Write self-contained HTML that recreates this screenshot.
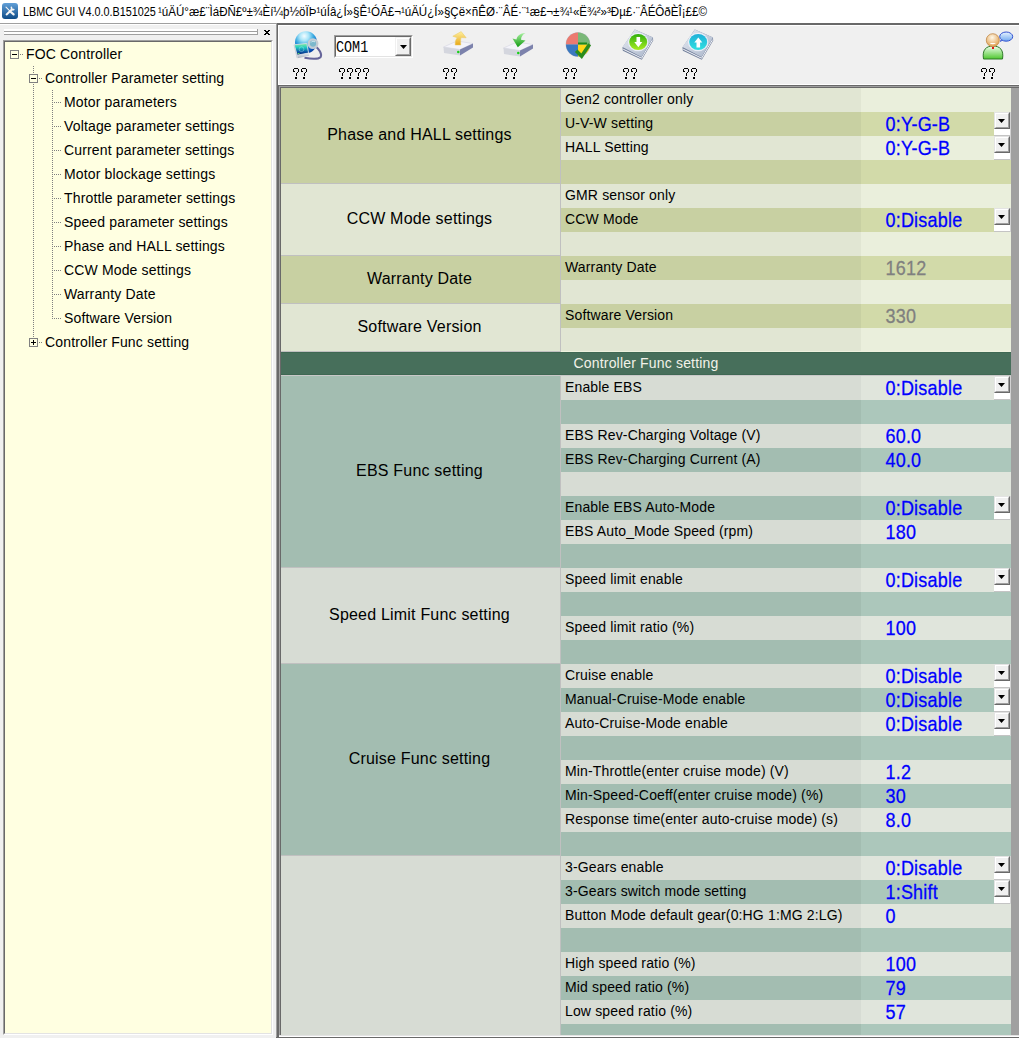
<!DOCTYPE html>
<html><head><meta charset="utf-8"><title>LBMC GUI</title>
<style>
*{margin:0;padding:0;box-sizing:border-box}
html,body{width:1020px;height:1038px;overflow:hidden;background:#F0F0F0;font-family:"Liberation Sans",sans-serif;color:#000}
.a{position:absolute}
.t{position:absolute;white-space:pre;line-height:1}
.tt{font-size:14px;letter-spacing:0.15px}
.ft{font-size:14px;left:565px;letter-spacing:0.15px}
.vt{font-size:18px;left:885.5px;letter-spacing:0.2px;color:#0000FF;transform-origin:0 14px;transform:scaleY(1.077);-webkit-text-stroke:0.25px currentColor}
.gt{font-size:16px;left:280px;width:279px;text-align:center;letter-spacing:0.2px}
.mono{font-family:"Liberation Mono",monospace}
</style></head><body>

<div class="a" style="left:0;top:0;width:1020px;height:23px;background:#fff"></div>
<div class="a" style="left:0;top:23px;width:276px;height:1px;background:#A0A0A0"></div>
<div class="a" style="left:0;top:24px;width:276px;height:1px;background:#fff"></div>
<div class="a" style="left:1019px;top:23px;width:1px;height:1015px;background:#fff"></div>
<div class="a" style="left:2px;top:3px;width:16px;height:16px;border-radius:3px;background:linear-gradient(#62A0D8,#0E4A86)"></div>
<svg class="a" style="left:2px;top:3px" width="16" height="16" viewBox="0 0 16 16"><path d="M4 4.2 L8 8.2" stroke="#F4F4F4" stroke-width="1.1" stroke-linecap="round"/><path d="M8 8.2 L11.6 11.4" stroke="#F4F4F4" stroke-width="2.2" stroke-linecap="round"/><path d="M4.6 11.4 L9.8 6.6" stroke="#F4F4F4" stroke-width="2" stroke-linecap="round"/><path d="M9.4 4.4 L9.8 6.6 L11.8 6.6" stroke="#F4F4F4" stroke-width="1.6" fill="none" stroke-linecap="round"/></svg>
<div class="t" style="left:23px;top:6px;font-size:12px"><span style="display:inline-block;transform-origin:0 0;transform:scaleX(0.9)">LBMC GUI V4.0.0.B151025</span></div>
<div class="t" style="left:158px;top:6px;font-size:12px"><span style="display:inline-block;transform-origin:0 0;transform:scaleX(0.963)">¹úÄÚ°æ£¨ÌáÐÑ£º±¾Èí¼þ½öÏÞ¹úÍâ¿Í»§Ê¹ÓÃ£¬¹úÄÚ¿Í»§Çë×ñÊØ·¨ÂÉ·¨¹æ£¬±¾¹«Ë¾²»³Ðµ£·¨ÂÉÔðÈÎ¡££©</span></div>
<div class="a" style="left:4px;top:29px;width:253px;height:2px;background:#fff"></div>
<div class="a" style="left:4px;top:31px;width:253px;height:1px;background:#A0A0A0"></div>
<div class="a" style="left:4px;top:32px;width:253px;height:2px;background:#fff"></div>
<div class="a" style="left:4px;top:34px;width:254px;height:1px;background:#A0A0A0"></div>
<div class="a" style="left:257px;top:29px;width:1px;height:6px;background:#A0A0A0"></div>
<svg class="a" style="left:0;top:0" width="276" height="40"><rect x="264" y="30" width="1" height="1" fill="#000"/><rect x="265" y="30" width="1" height="1" fill="#000"/><rect x="268" y="30" width="1" height="1" fill="#000"/><rect x="269" y="30" width="1" height="1" fill="#000"/><rect x="265" y="31" width="1" height="1" fill="#000"/><rect x="266" y="31" width="1" height="1" fill="#000"/><rect x="267" y="31" width="1" height="1" fill="#000"/><rect x="268" y="31" width="1" height="1" fill="#000"/><rect x="266" y="32" width="1" height="1" fill="#000"/><rect x="267" y="32" width="1" height="1" fill="#000"/><rect x="265" y="33" width="1" height="1" fill="#000"/><rect x="266" y="33" width="1" height="1" fill="#000"/><rect x="267" y="33" width="1" height="1" fill="#000"/><rect x="268" y="33" width="1" height="1" fill="#000"/><rect x="264" y="34" width="1" height="1" fill="#000"/><rect x="265" y="34" width="1" height="1" fill="#000"/><rect x="268" y="34" width="1" height="1" fill="#000"/><rect x="269" y="34" width="1" height="1" fill="#000"/></svg>
<div class="a" style="left:3px;top:40px;width:270px;height:995px;background:#FFFFE1;border-top:1px solid #A0A0A0;border-left:1px solid #A0A0A0;border-right:1px solid #fff;border-bottom:1px solid #fff"><div style="position:absolute;left:0;top:0;right:0;bottom:0;border-top:1px solid #696969;border-left:1px solid #696969;border-right:1px solid #E3E3E3;border-bottom:1px solid #E3E3E3"></div></div>
<div class="a" style="left:276px;top:23px;width:743px;height:2px;background:#696969"></div>
<div class="a" style="left:276px;top:23px;width:1px;height:1015px;background:#A0A0A0"></div>
<div class="a" style="left:277px;top:25px;width:1px;height:1013px;background:#696969"></div>
<div class="a" style="left:278px;top:25px;width:741px;height:60px;background:#F0F0F0;border-left:1px solid #fff;border-top:1px solid #fff;border-bottom:1px solid #fff"></div>
<div class="a" style="left:278px;top:85px;width:741px;height:1px;background:#696969"></div>
<div class="a" style="left:278px;top:86px;width:741px;height:1px;background:#A0A0A0"></div>
<div class="a" style="left:278px;top:87px;width:741px;height:1px;background:#696969"></div>
<div class="a" style="left:278px;top:85px;width:1px;height:953px;background:#696969"></div>
<div class="a" style="left:279px;top:86px;width:1px;height:952px;background:#A0A0A0"></div>
<div class="a" style="left:280px;top:87px;width:1px;height:951px;background:#696969"></div>
<div class="a" style="left:281px;top:88px;width:738px;height:950px;background:#A0A0A0"></div>
<div class="a" style="left:561px;top:88px;width:300px;height:24px;background:#E1E6D3"></div>
<div class="a" style="left:861px;top:88px;width:150px;height:24px;background:#EAEFDC"></div>
<div class="t ft" style="top:92px">Gen2 controller only</div>
<div class="a" style="left:561px;top:112px;width:300px;height:24px;background:#C8D0A2"></div>
<div class="a" style="left:861px;top:112px;width:150px;height:24px;background:#D2DAA9"></div>
<div class="t ft" style="top:116px">U-V-W setting</div>
<div class="t vt" style="top:116px;color:#0000FF">0:Y-G-B</div>
<div class="a" style="left:994px;top:129px;width:16px;height:6px;background:#fff"></div>
<div class="a" style="left:994px;top:135px;width:16px;height:1px;background:#C4C4C4"></div>
<div class="a" style="left:1010px;top:112px;width:1px;height:24px;background:#D2D2D2"></div>
<div class="a" style="left:994px;top:112px;width:16px;height:17px;border-top:1px solid #E3E3E3;border-left:1px solid #E3E3E3;border-right:1px solid #696969;border-bottom:1px solid #696969"><div style="position:absolute;left:0;top:0;width:14px;height:15px;background:#F0F0F0;border-top:1px solid #fff;border-left:1px solid #fff;border-right:1px solid #A0A0A0;border-bottom:1px solid #A0A0A0"></div><svg style="position:absolute;left:3px;top:6px" width="7" height="4"><path d="M0 0H7L3.5 4Z" fill="#000"/></svg></div>
<div class="a" style="left:561px;top:136px;width:300px;height:24px;background:#E1E6D3"></div>
<div class="a" style="left:861px;top:136px;width:150px;height:24px;background:#EAEFDC"></div>
<div class="t ft" style="top:140px">HALL Setting</div>
<div class="t vt" style="top:140px;color:#0000FF">0:Y-G-B</div>
<div class="a" style="left:994px;top:153px;width:16px;height:6px;background:#fff"></div>
<div class="a" style="left:994px;top:159px;width:16px;height:1px;background:#C4C4C4"></div>
<div class="a" style="left:1010px;top:136px;width:1px;height:24px;background:#D2D2D2"></div>
<div class="a" style="left:994px;top:136px;width:16px;height:17px;border-top:1px solid #E3E3E3;border-left:1px solid #E3E3E3;border-right:1px solid #696969;border-bottom:1px solid #696969"><div style="position:absolute;left:0;top:0;width:14px;height:15px;background:#F0F0F0;border-top:1px solid #fff;border-left:1px solid #fff;border-right:1px solid #A0A0A0;border-bottom:1px solid #A0A0A0"></div><svg style="position:absolute;left:3px;top:6px" width="7" height="4"><path d="M0 0H7L3.5 4Z" fill="#000"/></svg></div>
<div class="a" style="left:561px;top:160px;width:300px;height:24px;background:#C8D0A2"></div>
<div class="a" style="left:861px;top:160px;width:150px;height:24px;background:#D2DAA9"></div>
<div class="a" style="left:561px;top:184px;width:300px;height:24px;background:#E1E6D3"></div>
<div class="a" style="left:861px;top:184px;width:150px;height:24px;background:#EAEFDC"></div>
<div class="t ft" style="top:188px">GMR sensor only</div>
<div class="a" style="left:561px;top:208px;width:300px;height:24px;background:#C8D0A2"></div>
<div class="a" style="left:861px;top:208px;width:150px;height:24px;background:#D2DAA9"></div>
<div class="t ft" style="top:212px">CCW Mode</div>
<div class="t vt" style="top:212px;color:#0000FF">0:Disable</div>
<div class="a" style="left:994px;top:225px;width:16px;height:6px;background:#fff"></div>
<div class="a" style="left:994px;top:231px;width:16px;height:1px;background:#C4C4C4"></div>
<div class="a" style="left:1010px;top:208px;width:1px;height:24px;background:#D2D2D2"></div>
<div class="a" style="left:994px;top:208px;width:16px;height:17px;border-top:1px solid #E3E3E3;border-left:1px solid #E3E3E3;border-right:1px solid #696969;border-bottom:1px solid #696969"><div style="position:absolute;left:0;top:0;width:14px;height:15px;background:#F0F0F0;border-top:1px solid #fff;border-left:1px solid #fff;border-right:1px solid #A0A0A0;border-bottom:1px solid #A0A0A0"></div><svg style="position:absolute;left:3px;top:6px" width="7" height="4"><path d="M0 0H7L3.5 4Z" fill="#000"/></svg></div>
<div class="a" style="left:561px;top:232px;width:300px;height:24px;background:#E1E6D3"></div>
<div class="a" style="left:861px;top:232px;width:150px;height:24px;background:#EAEFDC"></div>
<div class="a" style="left:561px;top:256px;width:300px;height:24px;background:#C8D0A2"></div>
<div class="a" style="left:861px;top:256px;width:150px;height:24px;background:#D2DAA9"></div>
<div class="t ft" style="top:260px">Warranty Date</div>
<div class="t vt" style="top:260px;color:#808080">1612</div>
<div class="a" style="left:561px;top:280px;width:300px;height:24px;background:#E1E6D3"></div>
<div class="a" style="left:861px;top:280px;width:150px;height:24px;background:#EAEFDC"></div>
<div class="a" style="left:561px;top:304px;width:300px;height:24px;background:#C8D0A2"></div>
<div class="a" style="left:861px;top:304px;width:150px;height:24px;background:#D2DAA9"></div>
<div class="t ft" style="top:308px">Software Version</div>
<div class="t vt" style="top:308px;color:#808080">330</div>
<div class="a" style="left:561px;top:328px;width:300px;height:24px;background:#E1E6D3"></div>
<div class="a" style="left:861px;top:328px;width:150px;height:24px;background:#EAEFDC"></div>
<div class="a" style="left:561px;top:376px;width:300px;height:24px;background:#D7DCD4"></div>
<div class="a" style="left:861px;top:376px;width:150px;height:24px;background:#E0E5DC"></div>
<div class="t ft" style="top:380px">Enable EBS</div>
<div class="t vt" style="top:380px;color:#0000FF">0:Disable</div>
<div class="a" style="left:994px;top:393px;width:16px;height:6px;background:#fff"></div>
<div class="a" style="left:994px;top:399px;width:16px;height:1px;background:#C4C4C4"></div>
<div class="a" style="left:1010px;top:376px;width:1px;height:24px;background:#D2D2D2"></div>
<div class="a" style="left:994px;top:376px;width:16px;height:17px;border-top:1px solid #E3E3E3;border-left:1px solid #E3E3E3;border-right:1px solid #696969;border-bottom:1px solid #696969"><div style="position:absolute;left:0;top:0;width:14px;height:15px;background:#F0F0F0;border-top:1px solid #fff;border-left:1px solid #fff;border-right:1px solid #A0A0A0;border-bottom:1px solid #A0A0A0"></div><svg style="position:absolute;left:3px;top:6px" width="7" height="4"><path d="M0 0H7L3.5 4Z" fill="#000"/></svg></div>
<div class="a" style="left:561px;top:400px;width:300px;height:24px;background:#A3BDB1"></div>
<div class="a" style="left:861px;top:400px;width:150px;height:24px;background:#ACC7BB"></div>
<div class="a" style="left:561px;top:424px;width:300px;height:24px;background:#D7DCD4"></div>
<div class="a" style="left:861px;top:424px;width:150px;height:24px;background:#E0E5DC"></div>
<div class="t ft" style="top:428px">EBS Rev-Charging Voltage (V)</div>
<div class="t vt" style="top:428px;color:#0000FF">60.0</div>
<div class="a" style="left:561px;top:448px;width:300px;height:24px;background:#A3BDB1"></div>
<div class="a" style="left:861px;top:448px;width:150px;height:24px;background:#ACC7BB"></div>
<div class="t ft" style="top:452px">EBS Rev-Charging Current (A)</div>
<div class="t vt" style="top:452px;color:#0000FF">40.0</div>
<div class="a" style="left:561px;top:472px;width:300px;height:24px;background:#D7DCD4"></div>
<div class="a" style="left:861px;top:472px;width:150px;height:24px;background:#E0E5DC"></div>
<div class="a" style="left:561px;top:496px;width:300px;height:24px;background:#A3BDB1"></div>
<div class="a" style="left:861px;top:496px;width:150px;height:24px;background:#ACC7BB"></div>
<div class="t ft" style="top:500px">Enable EBS Auto-Mode</div>
<div class="t vt" style="top:500px;color:#0000FF">0:Disable</div>
<div class="a" style="left:994px;top:513px;width:16px;height:6px;background:#fff"></div>
<div class="a" style="left:994px;top:519px;width:16px;height:1px;background:#C4C4C4"></div>
<div class="a" style="left:1010px;top:496px;width:1px;height:24px;background:#D2D2D2"></div>
<div class="a" style="left:994px;top:496px;width:16px;height:17px;border-top:1px solid #E3E3E3;border-left:1px solid #E3E3E3;border-right:1px solid #696969;border-bottom:1px solid #696969"><div style="position:absolute;left:0;top:0;width:14px;height:15px;background:#F0F0F0;border-top:1px solid #fff;border-left:1px solid #fff;border-right:1px solid #A0A0A0;border-bottom:1px solid #A0A0A0"></div><svg style="position:absolute;left:3px;top:6px" width="7" height="4"><path d="M0 0H7L3.5 4Z" fill="#000"/></svg></div>
<div class="a" style="left:561px;top:520px;width:300px;height:24px;background:#D7DCD4"></div>
<div class="a" style="left:861px;top:520px;width:150px;height:24px;background:#E0E5DC"></div>
<div class="t ft" style="top:524px">EBS Auto_Mode Speed (rpm)</div>
<div class="t vt" style="top:524px;color:#0000FF">180</div>
<div class="a" style="left:561px;top:544px;width:300px;height:24px;background:#A3BDB1"></div>
<div class="a" style="left:861px;top:544px;width:150px;height:24px;background:#ACC7BB"></div>
<div class="a" style="left:561px;top:568px;width:300px;height:24px;background:#D7DCD4"></div>
<div class="a" style="left:861px;top:568px;width:150px;height:24px;background:#E0E5DC"></div>
<div class="t ft" style="top:572px">Speed limit enable</div>
<div class="t vt" style="top:572px;color:#0000FF">0:Disable</div>
<div class="a" style="left:994px;top:585px;width:16px;height:6px;background:#fff"></div>
<div class="a" style="left:994px;top:591px;width:16px;height:1px;background:#C4C4C4"></div>
<div class="a" style="left:1010px;top:568px;width:1px;height:24px;background:#D2D2D2"></div>
<div class="a" style="left:994px;top:568px;width:16px;height:17px;border-top:1px solid #E3E3E3;border-left:1px solid #E3E3E3;border-right:1px solid #696969;border-bottom:1px solid #696969"><div style="position:absolute;left:0;top:0;width:14px;height:15px;background:#F0F0F0;border-top:1px solid #fff;border-left:1px solid #fff;border-right:1px solid #A0A0A0;border-bottom:1px solid #A0A0A0"></div><svg style="position:absolute;left:3px;top:6px" width="7" height="4"><path d="M0 0H7L3.5 4Z" fill="#000"/></svg></div>
<div class="a" style="left:561px;top:592px;width:300px;height:24px;background:#A3BDB1"></div>
<div class="a" style="left:861px;top:592px;width:150px;height:24px;background:#ACC7BB"></div>
<div class="a" style="left:561px;top:616px;width:300px;height:24px;background:#D7DCD4"></div>
<div class="a" style="left:861px;top:616px;width:150px;height:24px;background:#E0E5DC"></div>
<div class="t ft" style="top:620px">Speed limit ratio (%)</div>
<div class="t vt" style="top:620px;color:#0000FF">100</div>
<div class="a" style="left:561px;top:640px;width:300px;height:24px;background:#A3BDB1"></div>
<div class="a" style="left:861px;top:640px;width:150px;height:24px;background:#ACC7BB"></div>
<div class="a" style="left:561px;top:664px;width:300px;height:24px;background:#D7DCD4"></div>
<div class="a" style="left:861px;top:664px;width:150px;height:24px;background:#E0E5DC"></div>
<div class="t ft" style="top:668px">Cruise enable</div>
<div class="t vt" style="top:668px;color:#0000FF">0:Disable</div>
<div class="a" style="left:994px;top:681px;width:16px;height:6px;background:#fff"></div>
<div class="a" style="left:994px;top:687px;width:16px;height:1px;background:#C4C4C4"></div>
<div class="a" style="left:1010px;top:664px;width:1px;height:24px;background:#D2D2D2"></div>
<div class="a" style="left:994px;top:664px;width:16px;height:17px;border-top:1px solid #E3E3E3;border-left:1px solid #E3E3E3;border-right:1px solid #696969;border-bottom:1px solid #696969"><div style="position:absolute;left:0;top:0;width:14px;height:15px;background:#F0F0F0;border-top:1px solid #fff;border-left:1px solid #fff;border-right:1px solid #A0A0A0;border-bottom:1px solid #A0A0A0"></div><svg style="position:absolute;left:3px;top:6px" width="7" height="4"><path d="M0 0H7L3.5 4Z" fill="#000"/></svg></div>
<div class="a" style="left:561px;top:688px;width:300px;height:24px;background:#A3BDB1"></div>
<div class="a" style="left:861px;top:688px;width:150px;height:24px;background:#ACC7BB"></div>
<div class="t ft" style="top:692px">Manual-Cruise-Mode enable</div>
<div class="t vt" style="top:692px;color:#0000FF">0:Disable</div>
<div class="a" style="left:994px;top:705px;width:16px;height:6px;background:#fff"></div>
<div class="a" style="left:994px;top:711px;width:16px;height:1px;background:#C4C4C4"></div>
<div class="a" style="left:1010px;top:688px;width:1px;height:24px;background:#D2D2D2"></div>
<div class="a" style="left:994px;top:688px;width:16px;height:17px;border-top:1px solid #E3E3E3;border-left:1px solid #E3E3E3;border-right:1px solid #696969;border-bottom:1px solid #696969"><div style="position:absolute;left:0;top:0;width:14px;height:15px;background:#F0F0F0;border-top:1px solid #fff;border-left:1px solid #fff;border-right:1px solid #A0A0A0;border-bottom:1px solid #A0A0A0"></div><svg style="position:absolute;left:3px;top:6px" width="7" height="4"><path d="M0 0H7L3.5 4Z" fill="#000"/></svg></div>
<div class="a" style="left:561px;top:712px;width:300px;height:24px;background:#D7DCD4"></div>
<div class="a" style="left:861px;top:712px;width:150px;height:24px;background:#E0E5DC"></div>
<div class="t ft" style="top:716px">Auto-Cruise-Mode enable</div>
<div class="t vt" style="top:716px;color:#0000FF">0:Disable</div>
<div class="a" style="left:994px;top:729px;width:16px;height:6px;background:#fff"></div>
<div class="a" style="left:994px;top:735px;width:16px;height:1px;background:#C4C4C4"></div>
<div class="a" style="left:1010px;top:712px;width:1px;height:24px;background:#D2D2D2"></div>
<div class="a" style="left:994px;top:712px;width:16px;height:17px;border-top:1px solid #E3E3E3;border-left:1px solid #E3E3E3;border-right:1px solid #696969;border-bottom:1px solid #696969"><div style="position:absolute;left:0;top:0;width:14px;height:15px;background:#F0F0F0;border-top:1px solid #fff;border-left:1px solid #fff;border-right:1px solid #A0A0A0;border-bottom:1px solid #A0A0A0"></div><svg style="position:absolute;left:3px;top:6px" width="7" height="4"><path d="M0 0H7L3.5 4Z" fill="#000"/></svg></div>
<div class="a" style="left:561px;top:736px;width:300px;height:24px;background:#A3BDB1"></div>
<div class="a" style="left:861px;top:736px;width:150px;height:24px;background:#ACC7BB"></div>
<div class="a" style="left:561px;top:760px;width:300px;height:24px;background:#D7DCD4"></div>
<div class="a" style="left:861px;top:760px;width:150px;height:24px;background:#E0E5DC"></div>
<div class="t ft" style="top:764px">Min-Throttle(enter cruise mode) (V)</div>
<div class="t vt" style="top:764px;color:#0000FF">1.2</div>
<div class="a" style="left:561px;top:784px;width:300px;height:24px;background:#A3BDB1"></div>
<div class="a" style="left:861px;top:784px;width:150px;height:24px;background:#ACC7BB"></div>
<div class="t ft" style="top:788px">Min-Speed-Coeff(enter cruise mode) (%)</div>
<div class="t vt" style="top:788px;color:#0000FF">30</div>
<div class="a" style="left:561px;top:808px;width:300px;height:24px;background:#D7DCD4"></div>
<div class="a" style="left:861px;top:808px;width:150px;height:24px;background:#E0E5DC"></div>
<div class="t ft" style="top:812px">Response time(enter auto-cruise mode) (s)</div>
<div class="t vt" style="top:812px;color:#0000FF">8.0</div>
<div class="a" style="left:561px;top:832px;width:300px;height:24px;background:#A3BDB1"></div>
<div class="a" style="left:861px;top:832px;width:150px;height:24px;background:#ACC7BB"></div>
<div class="a" style="left:561px;top:856px;width:300px;height:24px;background:#D7DCD4"></div>
<div class="a" style="left:861px;top:856px;width:150px;height:24px;background:#E0E5DC"></div>
<div class="t ft" style="top:860px">3-Gears enable</div>
<div class="t vt" style="top:860px;color:#0000FF">0:Disable</div>
<div class="a" style="left:994px;top:873px;width:16px;height:6px;background:#fff"></div>
<div class="a" style="left:994px;top:879px;width:16px;height:1px;background:#C4C4C4"></div>
<div class="a" style="left:1010px;top:856px;width:1px;height:24px;background:#D2D2D2"></div>
<div class="a" style="left:994px;top:856px;width:16px;height:17px;border-top:1px solid #E3E3E3;border-left:1px solid #E3E3E3;border-right:1px solid #696969;border-bottom:1px solid #696969"><div style="position:absolute;left:0;top:0;width:14px;height:15px;background:#F0F0F0;border-top:1px solid #fff;border-left:1px solid #fff;border-right:1px solid #A0A0A0;border-bottom:1px solid #A0A0A0"></div><svg style="position:absolute;left:3px;top:6px" width="7" height="4"><path d="M0 0H7L3.5 4Z" fill="#000"/></svg></div>
<div class="a" style="left:561px;top:880px;width:300px;height:24px;background:#A3BDB1"></div>
<div class="a" style="left:861px;top:880px;width:150px;height:24px;background:#ACC7BB"></div>
<div class="t ft" style="top:884px">3-Gears switch mode setting</div>
<div class="t vt" style="top:884px;color:#0000FF">1:Shift</div>
<div class="a" style="left:994px;top:897px;width:16px;height:6px;background:#fff"></div>
<div class="a" style="left:994px;top:903px;width:16px;height:1px;background:#C4C4C4"></div>
<div class="a" style="left:1010px;top:880px;width:1px;height:24px;background:#D2D2D2"></div>
<div class="a" style="left:994px;top:880px;width:16px;height:17px;border-top:1px solid #E3E3E3;border-left:1px solid #E3E3E3;border-right:1px solid #696969;border-bottom:1px solid #696969"><div style="position:absolute;left:0;top:0;width:14px;height:15px;background:#F0F0F0;border-top:1px solid #fff;border-left:1px solid #fff;border-right:1px solid #A0A0A0;border-bottom:1px solid #A0A0A0"></div><svg style="position:absolute;left:3px;top:6px" width="7" height="4"><path d="M0 0H7L3.5 4Z" fill="#000"/></svg></div>
<div class="a" style="left:561px;top:904px;width:300px;height:24px;background:#D7DCD4"></div>
<div class="a" style="left:861px;top:904px;width:150px;height:24px;background:#E0E5DC"></div>
<div class="t ft" style="top:908px">Button Mode default gear(0:HG 1:MG 2:LG)</div>
<div class="t vt" style="top:908px;color:#0000FF">0</div>
<div class="a" style="left:561px;top:928px;width:300px;height:24px;background:#A3BDB1"></div>
<div class="a" style="left:861px;top:928px;width:150px;height:24px;background:#ACC7BB"></div>
<div class="a" style="left:561px;top:952px;width:300px;height:24px;background:#D7DCD4"></div>
<div class="a" style="left:861px;top:952px;width:150px;height:24px;background:#E0E5DC"></div>
<div class="t ft" style="top:956px">High speed ratio (%)</div>
<div class="t vt" style="top:956px;color:#0000FF">100</div>
<div class="a" style="left:561px;top:976px;width:300px;height:24px;background:#A3BDB1"></div>
<div class="a" style="left:861px;top:976px;width:150px;height:24px;background:#ACC7BB"></div>
<div class="t ft" style="top:980px">Mid speed ratio (%)</div>
<div class="t vt" style="top:980px;color:#0000FF">79</div>
<div class="a" style="left:561px;top:1000px;width:300px;height:24px;background:#D7DCD4"></div>
<div class="a" style="left:861px;top:1000px;width:150px;height:24px;background:#E0E5DC"></div>
<div class="t ft" style="top:1004px">Low speed ratio (%)</div>
<div class="t vt" style="top:1004px;color:#0000FF">57</div>
<div class="a" style="left:561px;top:1024px;width:300px;height:11px;background:#A3BDB1"></div>
<div class="a" style="left:861px;top:1024px;width:150px;height:11px;background:#ACC7BB"></div>
<div class="a" style="left:281px;top:351px;width:730px;height:1px;background:#EEF2DF"></div>
<div class="a" style="left:281px;top:352px;width:730px;height:23px;background:#476F5B;border-top:1px solid #3F6853;border-bottom:1px solid #3F6853"></div>
<div class="a" style="left:281px;top:375px;width:730px;height:1px;background:#C8C8C8"></div>
<div class="t tt" style="left:281px;top:356px;width:730px;text-align:center;color:#F2F2E8;letter-spacing:0.18px">Controller Func setting</div>
<div class="a" style="left:281px;top:88px;width:279px;height:96px;background:#C8D0A2;border-bottom:1px solid #C0C0C0"></div>
<div class="a" style="left:560px;top:88px;width:1px;height:96px;background:#C0C0C0"></div>
<div class="t gt" style="top:127px">Phase and HALL settings</div>
<div class="a" style="left:281px;top:184px;width:279px;height:72px;background:#E1E6D3;border-bottom:1px solid #C0C0C0"></div>
<div class="a" style="left:560px;top:184px;width:1px;height:72px;background:#C0C0C0"></div>
<div class="t gt" style="top:211px">CCW Mode settings</div>
<div class="a" style="left:281px;top:256px;width:279px;height:48px;background:#C8D0A2;border-bottom:1px solid #C0C0C0"></div>
<div class="a" style="left:560px;top:256px;width:1px;height:48px;background:#C0C0C0"></div>
<div class="t gt" style="top:271px">Warranty Date</div>
<div class="a" style="left:281px;top:304px;width:279px;height:48px;background:#E1E6D3;border-bottom:1px solid #C0C0C0"></div>
<div class="a" style="left:560px;top:304px;width:1px;height:48px;background:#C0C0C0"></div>
<div class="t gt" style="top:319px">Software Version</div>
<div class="a" style="left:281px;top:376px;width:279px;height:192px;background:#A3BDB1;border-bottom:1px solid #C0C0C0"></div>
<div class="a" style="left:560px;top:376px;width:1px;height:192px;background:#C0C0C0"></div>
<div class="t gt" style="top:463px">EBS Func setting</div>
<div class="a" style="left:281px;top:568px;width:279px;height:96px;background:#D7DCD4;border-bottom:1px solid #C0C0C0"></div>
<div class="a" style="left:560px;top:568px;width:1px;height:96px;background:#C0C0C0"></div>
<div class="t gt" style="top:607px">Speed Limit Func setting</div>
<div class="a" style="left:281px;top:664px;width:279px;height:192px;background:#A3BDB1;border-bottom:1px solid #C0C0C0"></div>
<div class="a" style="left:560px;top:664px;width:1px;height:192px;background:#C0C0C0"></div>
<div class="t gt" style="top:751px">Cruise Func setting</div>
<div class="a" style="left:281px;top:856px;width:279px;height:204px;background:#D7DCD4;border-bottom:1px solid #C0C0C0"></div>
<div class="a" style="left:560px;top:856px;width:1px;height:204px;background:#C0C0C0"></div>
<div class="a" style="left:279px;top:1035px;width:740px;height:1px;background:#E3E3E3"></div>
<div class="a" style="left:279px;top:1036px;width:740px;height:1px;background:#fff"></div>
<div class="a" style="left:276px;top:1037px;width:743px;height:1px;background:#696969"></div>
<div class="t tt" style="left:26px;top:47px">FOC Controller</div>
<div class="t tt" style="left:45px;top:71px">Controller Parameter setting</div>
<div class="t tt" style="left:64px;top:95px">Motor parameters</div>
<div class="t tt" style="left:64px;top:119px">Voltage parameter settings</div>
<div class="t tt" style="left:64px;top:143px">Current parameter settings</div>
<div class="t tt" style="left:64px;top:167px">Motor blockage settings</div>
<div class="t tt" style="left:64px;top:191px">Throttle parameter settings</div>
<div class="t tt" style="left:64px;top:215px">Speed parameter settings</div>
<div class="t tt" style="left:64px;top:239px">Phase and HALL settings</div>
<div class="t tt" style="left:64px;top:263px">CCW Mode settings</div>
<div class="t tt" style="left:64px;top:287px">Warranty Date</div>
<div class="t tt" style="left:64px;top:311px">Software Version</div>
<div class="t tt" style="left:45px;top:335px">Controller Func setting</div>
<svg class="a" style="left:0;top:0" width="276" height="360"><rect x="10.5" y="50.5" width="8" height="8" fill="#FFFFE1" stroke="#808080" stroke-width="1"/><rect x="12" y="54" width="5" height="1" fill="#000"/><rect x="20" y="54" width="1" height="1" fill="#808080"/><rect x="22" y="54" width="1" height="1" fill="#808080"/><rect x="29.5" y="74.5" width="8" height="8" fill="#FFFFE1" stroke="#808080" stroke-width="1"/><rect x="31" y="78" width="5" height="1" fill="#000"/><rect x="39" y="78" width="1" height="1" fill="#808080"/><rect x="41" y="78" width="1" height="1" fill="#808080"/><rect x="33" y="66" width="1" height="1" fill="#808080"/><rect x="33" y="68" width="1" height="1" fill="#808080"/><rect x="33" y="70" width="1" height="1" fill="#808080"/><rect x="33" y="72" width="1" height="1" fill="#808080"/><rect x="33" y="84" width="1" height="1" fill="#808080"/><rect x="33" y="86" width="1" height="1" fill="#808080"/><rect x="33" y="88" width="1" height="1" fill="#808080"/><rect x="33" y="90" width="1" height="1" fill="#808080"/><rect x="33" y="92" width="1" height="1" fill="#808080"/><rect x="33" y="94" width="1" height="1" fill="#808080"/><rect x="33" y="96" width="1" height="1" fill="#808080"/><rect x="33" y="98" width="1" height="1" fill="#808080"/><rect x="33" y="100" width="1" height="1" fill="#808080"/><rect x="33" y="102" width="1" height="1" fill="#808080"/><rect x="33" y="104" width="1" height="1" fill="#808080"/><rect x="33" y="106" width="1" height="1" fill="#808080"/><rect x="33" y="108" width="1" height="1" fill="#808080"/><rect x="33" y="110" width="1" height="1" fill="#808080"/><rect x="33" y="112" width="1" height="1" fill="#808080"/><rect x="33" y="114" width="1" height="1" fill="#808080"/><rect x="33" y="116" width="1" height="1" fill="#808080"/><rect x="33" y="118" width="1" height="1" fill="#808080"/><rect x="33" y="120" width="1" height="1" fill="#808080"/><rect x="33" y="122" width="1" height="1" fill="#808080"/><rect x="33" y="124" width="1" height="1" fill="#808080"/><rect x="33" y="126" width="1" height="1" fill="#808080"/><rect x="33" y="128" width="1" height="1" fill="#808080"/><rect x="33" y="130" width="1" height="1" fill="#808080"/><rect x="33" y="132" width="1" height="1" fill="#808080"/><rect x="33" y="134" width="1" height="1" fill="#808080"/><rect x="33" y="136" width="1" height="1" fill="#808080"/><rect x="33" y="138" width="1" height="1" fill="#808080"/><rect x="33" y="140" width="1" height="1" fill="#808080"/><rect x="33" y="142" width="1" height="1" fill="#808080"/><rect x="33" y="144" width="1" height="1" fill="#808080"/><rect x="33" y="146" width="1" height="1" fill="#808080"/><rect x="33" y="148" width="1" height="1" fill="#808080"/><rect x="33" y="150" width="1" height="1" fill="#808080"/><rect x="33" y="152" width="1" height="1" fill="#808080"/><rect x="33" y="154" width="1" height="1" fill="#808080"/><rect x="33" y="156" width="1" height="1" fill="#808080"/><rect x="33" y="158" width="1" height="1" fill="#808080"/><rect x="33" y="160" width="1" height="1" fill="#808080"/><rect x="33" y="162" width="1" height="1" fill="#808080"/><rect x="33" y="164" width="1" height="1" fill="#808080"/><rect x="33" y="166" width="1" height="1" fill="#808080"/><rect x="33" y="168" width="1" height="1" fill="#808080"/><rect x="33" y="170" width="1" height="1" fill="#808080"/><rect x="33" y="172" width="1" height="1" fill="#808080"/><rect x="33" y="174" width="1" height="1" fill="#808080"/><rect x="33" y="176" width="1" height="1" fill="#808080"/><rect x="33" y="178" width="1" height="1" fill="#808080"/><rect x="33" y="180" width="1" height="1" fill="#808080"/><rect x="33" y="182" width="1" height="1" fill="#808080"/><rect x="33" y="184" width="1" height="1" fill="#808080"/><rect x="33" y="186" width="1" height="1" fill="#808080"/><rect x="33" y="188" width="1" height="1" fill="#808080"/><rect x="33" y="190" width="1" height="1" fill="#808080"/><rect x="33" y="192" width="1" height="1" fill="#808080"/><rect x="33" y="194" width="1" height="1" fill="#808080"/><rect x="33" y="196" width="1" height="1" fill="#808080"/><rect x="33" y="198" width="1" height="1" fill="#808080"/><rect x="33" y="200" width="1" height="1" fill="#808080"/><rect x="33" y="202" width="1" height="1" fill="#808080"/><rect x="33" y="204" width="1" height="1" fill="#808080"/><rect x="33" y="206" width="1" height="1" fill="#808080"/><rect x="33" y="208" width="1" height="1" fill="#808080"/><rect x="33" y="210" width="1" height="1" fill="#808080"/><rect x="33" y="212" width="1" height="1" fill="#808080"/><rect x="33" y="214" width="1" height="1" fill="#808080"/><rect x="33" y="216" width="1" height="1" fill="#808080"/><rect x="33" y="218" width="1" height="1" fill="#808080"/><rect x="33" y="220" width="1" height="1" fill="#808080"/><rect x="33" y="222" width="1" height="1" fill="#808080"/><rect x="33" y="224" width="1" height="1" fill="#808080"/><rect x="33" y="226" width="1" height="1" fill="#808080"/><rect x="33" y="228" width="1" height="1" fill="#808080"/><rect x="33" y="230" width="1" height="1" fill="#808080"/><rect x="33" y="232" width="1" height="1" fill="#808080"/><rect x="33" y="234" width="1" height="1" fill="#808080"/><rect x="33" y="236" width="1" height="1" fill="#808080"/><rect x="33" y="238" width="1" height="1" fill="#808080"/><rect x="33" y="240" width="1" height="1" fill="#808080"/><rect x="33" y="242" width="1" height="1" fill="#808080"/><rect x="33" y="244" width="1" height="1" fill="#808080"/><rect x="33" y="246" width="1" height="1" fill="#808080"/><rect x="33" y="248" width="1" height="1" fill="#808080"/><rect x="33" y="250" width="1" height="1" fill="#808080"/><rect x="33" y="252" width="1" height="1" fill="#808080"/><rect x="33" y="254" width="1" height="1" fill="#808080"/><rect x="33" y="256" width="1" height="1" fill="#808080"/><rect x="33" y="258" width="1" height="1" fill="#808080"/><rect x="33" y="260" width="1" height="1" fill="#808080"/><rect x="33" y="262" width="1" height="1" fill="#808080"/><rect x="33" y="264" width="1" height="1" fill="#808080"/><rect x="33" y="266" width="1" height="1" fill="#808080"/><rect x="33" y="268" width="1" height="1" fill="#808080"/><rect x="33" y="270" width="1" height="1" fill="#808080"/><rect x="33" y="272" width="1" height="1" fill="#808080"/><rect x="33" y="274" width="1" height="1" fill="#808080"/><rect x="33" y="276" width="1" height="1" fill="#808080"/><rect x="33" y="278" width="1" height="1" fill="#808080"/><rect x="33" y="280" width="1" height="1" fill="#808080"/><rect x="33" y="282" width="1" height="1" fill="#808080"/><rect x="33" y="284" width="1" height="1" fill="#808080"/><rect x="33" y="286" width="1" height="1" fill="#808080"/><rect x="33" y="288" width="1" height="1" fill="#808080"/><rect x="33" y="290" width="1" height="1" fill="#808080"/><rect x="33" y="292" width="1" height="1" fill="#808080"/><rect x="33" y="294" width="1" height="1" fill="#808080"/><rect x="33" y="296" width="1" height="1" fill="#808080"/><rect x="33" y="298" width="1" height="1" fill="#808080"/><rect x="33" y="300" width="1" height="1" fill="#808080"/><rect x="33" y="302" width="1" height="1" fill="#808080"/><rect x="33" y="304" width="1" height="1" fill="#808080"/><rect x="33" y="306" width="1" height="1" fill="#808080"/><rect x="33" y="308" width="1" height="1" fill="#808080"/><rect x="33" y="310" width="1" height="1" fill="#808080"/><rect x="33" y="312" width="1" height="1" fill="#808080"/><rect x="33" y="314" width="1" height="1" fill="#808080"/><rect x="33" y="316" width="1" height="1" fill="#808080"/><rect x="33" y="318" width="1" height="1" fill="#808080"/><rect x="33" y="320" width="1" height="1" fill="#808080"/><rect x="33" y="322" width="1" height="1" fill="#808080"/><rect x="33" y="324" width="1" height="1" fill="#808080"/><rect x="33" y="326" width="1" height="1" fill="#808080"/><rect x="33" y="328" width="1" height="1" fill="#808080"/><rect x="33" y="330" width="1" height="1" fill="#808080"/><rect x="33" y="332" width="1" height="1" fill="#808080"/><rect x="33" y="334" width="1" height="1" fill="#808080"/><rect x="33" y="336" width="1" height="1" fill="#808080"/><rect x="29.5" y="338.5" width="8" height="8" fill="#FFFFE1" stroke="#808080" stroke-width="1"/><rect x="31" y="342" width="5" height="1" fill="#000"/><rect x="33" y="340" width="1" height="5" fill="#000"/><rect x="39" y="342" width="1" height="1" fill="#808080"/><rect x="41" y="342" width="1" height="1" fill="#808080"/><rect x="52" y="90" width="1" height="1" fill="#808080"/><rect x="52" y="92" width="1" height="1" fill="#808080"/><rect x="52" y="94" width="1" height="1" fill="#808080"/><rect x="52" y="96" width="1" height="1" fill="#808080"/><rect x="52" y="98" width="1" height="1" fill="#808080"/><rect x="52" y="100" width="1" height="1" fill="#808080"/><rect x="52" y="102" width="1" height="1" fill="#808080"/><rect x="52" y="104" width="1" height="1" fill="#808080"/><rect x="52" y="106" width="1" height="1" fill="#808080"/><rect x="52" y="108" width="1" height="1" fill="#808080"/><rect x="52" y="110" width="1" height="1" fill="#808080"/><rect x="52" y="112" width="1" height="1" fill="#808080"/><rect x="52" y="114" width="1" height="1" fill="#808080"/><rect x="52" y="116" width="1" height="1" fill="#808080"/><rect x="52" y="118" width="1" height="1" fill="#808080"/><rect x="52" y="120" width="1" height="1" fill="#808080"/><rect x="52" y="122" width="1" height="1" fill="#808080"/><rect x="52" y="124" width="1" height="1" fill="#808080"/><rect x="52" y="126" width="1" height="1" fill="#808080"/><rect x="52" y="128" width="1" height="1" fill="#808080"/><rect x="52" y="130" width="1" height="1" fill="#808080"/><rect x="52" y="132" width="1" height="1" fill="#808080"/><rect x="52" y="134" width="1" height="1" fill="#808080"/><rect x="52" y="136" width="1" height="1" fill="#808080"/><rect x="52" y="138" width="1" height="1" fill="#808080"/><rect x="52" y="140" width="1" height="1" fill="#808080"/><rect x="52" y="142" width="1" height="1" fill="#808080"/><rect x="52" y="144" width="1" height="1" fill="#808080"/><rect x="52" y="146" width="1" height="1" fill="#808080"/><rect x="52" y="148" width="1" height="1" fill="#808080"/><rect x="52" y="150" width="1" height="1" fill="#808080"/><rect x="52" y="152" width="1" height="1" fill="#808080"/><rect x="52" y="154" width="1" height="1" fill="#808080"/><rect x="52" y="156" width="1" height="1" fill="#808080"/><rect x="52" y="158" width="1" height="1" fill="#808080"/><rect x="52" y="160" width="1" height="1" fill="#808080"/><rect x="52" y="162" width="1" height="1" fill="#808080"/><rect x="52" y="164" width="1" height="1" fill="#808080"/><rect x="52" y="166" width="1" height="1" fill="#808080"/><rect x="52" y="168" width="1" height="1" fill="#808080"/><rect x="52" y="170" width="1" height="1" fill="#808080"/><rect x="52" y="172" width="1" height="1" fill="#808080"/><rect x="52" y="174" width="1" height="1" fill="#808080"/><rect x="52" y="176" width="1" height="1" fill="#808080"/><rect x="52" y="178" width="1" height="1" fill="#808080"/><rect x="52" y="180" width="1" height="1" fill="#808080"/><rect x="52" y="182" width="1" height="1" fill="#808080"/><rect x="52" y="184" width="1" height="1" fill="#808080"/><rect x="52" y="186" width="1" height="1" fill="#808080"/><rect x="52" y="188" width="1" height="1" fill="#808080"/><rect x="52" y="190" width="1" height="1" fill="#808080"/><rect x="52" y="192" width="1" height="1" fill="#808080"/><rect x="52" y="194" width="1" height="1" fill="#808080"/><rect x="52" y="196" width="1" height="1" fill="#808080"/><rect x="52" y="198" width="1" height="1" fill="#808080"/><rect x="52" y="200" width="1" height="1" fill="#808080"/><rect x="52" y="202" width="1" height="1" fill="#808080"/><rect x="52" y="204" width="1" height="1" fill="#808080"/><rect x="52" y="206" width="1" height="1" fill="#808080"/><rect x="52" y="208" width="1" height="1" fill="#808080"/><rect x="52" y="210" width="1" height="1" fill="#808080"/><rect x="52" y="212" width="1" height="1" fill="#808080"/><rect x="52" y="214" width="1" height="1" fill="#808080"/><rect x="52" y="216" width="1" height="1" fill="#808080"/><rect x="52" y="218" width="1" height="1" fill="#808080"/><rect x="52" y="220" width="1" height="1" fill="#808080"/><rect x="52" y="222" width="1" height="1" fill="#808080"/><rect x="52" y="224" width="1" height="1" fill="#808080"/><rect x="52" y="226" width="1" height="1" fill="#808080"/><rect x="52" y="228" width="1" height="1" fill="#808080"/><rect x="52" y="230" width="1" height="1" fill="#808080"/><rect x="52" y="232" width="1" height="1" fill="#808080"/><rect x="52" y="234" width="1" height="1" fill="#808080"/><rect x="52" y="236" width="1" height="1" fill="#808080"/><rect x="52" y="238" width="1" height="1" fill="#808080"/><rect x="52" y="240" width="1" height="1" fill="#808080"/><rect x="52" y="242" width="1" height="1" fill="#808080"/><rect x="52" y="244" width="1" height="1" fill="#808080"/><rect x="52" y="246" width="1" height="1" fill="#808080"/><rect x="52" y="248" width="1" height="1" fill="#808080"/><rect x="52" y="250" width="1" height="1" fill="#808080"/><rect x="52" y="252" width="1" height="1" fill="#808080"/><rect x="52" y="254" width="1" height="1" fill="#808080"/><rect x="52" y="256" width="1" height="1" fill="#808080"/><rect x="52" y="258" width="1" height="1" fill="#808080"/><rect x="52" y="260" width="1" height="1" fill="#808080"/><rect x="52" y="262" width="1" height="1" fill="#808080"/><rect x="52" y="264" width="1" height="1" fill="#808080"/><rect x="52" y="266" width="1" height="1" fill="#808080"/><rect x="52" y="268" width="1" height="1" fill="#808080"/><rect x="52" y="270" width="1" height="1" fill="#808080"/><rect x="52" y="272" width="1" height="1" fill="#808080"/><rect x="52" y="274" width="1" height="1" fill="#808080"/><rect x="52" y="276" width="1" height="1" fill="#808080"/><rect x="52" y="278" width="1" height="1" fill="#808080"/><rect x="52" y="280" width="1" height="1" fill="#808080"/><rect x="52" y="282" width="1" height="1" fill="#808080"/><rect x="52" y="284" width="1" height="1" fill="#808080"/><rect x="52" y="286" width="1" height="1" fill="#808080"/><rect x="52" y="288" width="1" height="1" fill="#808080"/><rect x="52" y="290" width="1" height="1" fill="#808080"/><rect x="52" y="292" width="1" height="1" fill="#808080"/><rect x="52" y="294" width="1" height="1" fill="#808080"/><rect x="52" y="296" width="1" height="1" fill="#808080"/><rect x="52" y="298" width="1" height="1" fill="#808080"/><rect x="52" y="300" width="1" height="1" fill="#808080"/><rect x="52" y="302" width="1" height="1" fill="#808080"/><rect x="52" y="304" width="1" height="1" fill="#808080"/><rect x="52" y="306" width="1" height="1" fill="#808080"/><rect x="52" y="308" width="1" height="1" fill="#808080"/><rect x="52" y="310" width="1" height="1" fill="#808080"/><rect x="52" y="312" width="1" height="1" fill="#808080"/><rect x="52" y="314" width="1" height="1" fill="#808080"/><rect x="52" y="316" width="1" height="1" fill="#808080"/><rect x="52" y="318" width="1" height="1" fill="#808080"/><rect x="54" y="102" width="1" height="1" fill="#808080"/><rect x="56" y="102" width="1" height="1" fill="#808080"/><rect x="58" y="102" width="1" height="1" fill="#808080"/><rect x="60" y="102" width="1" height="1" fill="#808080"/><rect x="54" y="126" width="1" height="1" fill="#808080"/><rect x="56" y="126" width="1" height="1" fill="#808080"/><rect x="58" y="126" width="1" height="1" fill="#808080"/><rect x="60" y="126" width="1" height="1" fill="#808080"/><rect x="54" y="150" width="1" height="1" fill="#808080"/><rect x="56" y="150" width="1" height="1" fill="#808080"/><rect x="58" y="150" width="1" height="1" fill="#808080"/><rect x="60" y="150" width="1" height="1" fill="#808080"/><rect x="54" y="174" width="1" height="1" fill="#808080"/><rect x="56" y="174" width="1" height="1" fill="#808080"/><rect x="58" y="174" width="1" height="1" fill="#808080"/><rect x="60" y="174" width="1" height="1" fill="#808080"/><rect x="54" y="198" width="1" height="1" fill="#808080"/><rect x="56" y="198" width="1" height="1" fill="#808080"/><rect x="58" y="198" width="1" height="1" fill="#808080"/><rect x="60" y="198" width="1" height="1" fill="#808080"/><rect x="54" y="222" width="1" height="1" fill="#808080"/><rect x="56" y="222" width="1" height="1" fill="#808080"/><rect x="58" y="222" width="1" height="1" fill="#808080"/><rect x="60" y="222" width="1" height="1" fill="#808080"/><rect x="54" y="246" width="1" height="1" fill="#808080"/><rect x="56" y="246" width="1" height="1" fill="#808080"/><rect x="58" y="246" width="1" height="1" fill="#808080"/><rect x="60" y="246" width="1" height="1" fill="#808080"/><rect x="54" y="270" width="1" height="1" fill="#808080"/><rect x="56" y="270" width="1" height="1" fill="#808080"/><rect x="58" y="270" width="1" height="1" fill="#808080"/><rect x="60" y="270" width="1" height="1" fill="#808080"/><rect x="54" y="294" width="1" height="1" fill="#808080"/><rect x="56" y="294" width="1" height="1" fill="#808080"/><rect x="58" y="294" width="1" height="1" fill="#808080"/><rect x="60" y="294" width="1" height="1" fill="#808080"/><rect x="54" y="318" width="1" height="1" fill="#808080"/><rect x="56" y="318" width="1" height="1" fill="#808080"/><rect x="58" y="318" width="1" height="1" fill="#808080"/><rect x="60" y="318" width="1" height="1" fill="#808080"/></svg>
<svg class="a" style="left:293px;top:68px" width="16" height="11"><rect x="1" y="0" width="1" height="1" fill="#000"/><rect x="2" y="0" width="1" height="1" fill="#000"/><rect x="3" y="0" width="1" height="1" fill="#000"/><rect x="4" y="0" width="1" height="1" fill="#000"/><rect x="0" y="1" width="1" height="1" fill="#000"/><rect x="5" y="1" width="1" height="1" fill="#000"/><rect x="0" y="2" width="1" height="1" fill="#000"/><rect x="5" y="2" width="1" height="1" fill="#000"/><rect x="0" y="3" width="1" height="1" fill="#000"/><rect x="1" y="3" width="1" height="1" fill="#000"/><rect x="5" y="3" width="1" height="1" fill="#000"/><rect x="4" y="4" width="1" height="1" fill="#000"/><rect x="3" y="5" width="1" height="1" fill="#000"/><rect x="3" y="6" width="1" height="1" fill="#000"/><rect x="3" y="7" width="1" height="1" fill="#000"/><rect x="2" y="9" width="1" height="1" fill="#000"/><rect x="3" y="9" width="1" height="1" fill="#000"/><rect x="2" y="10" width="1" height="1" fill="#000"/><rect x="3" y="10" width="1" height="1" fill="#000"/><rect x="9" y="0" width="1" height="1" fill="#000"/><rect x="10" y="0" width="1" height="1" fill="#000"/><rect x="11" y="0" width="1" height="1" fill="#000"/><rect x="12" y="0" width="1" height="1" fill="#000"/><rect x="8" y="1" width="1" height="1" fill="#000"/><rect x="13" y="1" width="1" height="1" fill="#000"/><rect x="8" y="2" width="1" height="1" fill="#000"/><rect x="13" y="2" width="1" height="1" fill="#000"/><rect x="8" y="3" width="1" height="1" fill="#000"/><rect x="9" y="3" width="1" height="1" fill="#000"/><rect x="13" y="3" width="1" height="1" fill="#000"/><rect x="12" y="4" width="1" height="1" fill="#000"/><rect x="11" y="5" width="1" height="1" fill="#000"/><rect x="11" y="6" width="1" height="1" fill="#000"/><rect x="11" y="7" width="1" height="1" fill="#000"/><rect x="10" y="9" width="1" height="1" fill="#000"/><rect x="11" y="9" width="1" height="1" fill="#000"/><rect x="10" y="10" width="1" height="1" fill="#000"/><rect x="11" y="10" width="1" height="1" fill="#000"/></svg>
<svg class="a" style="left:339px;top:68px" width="32" height="11"><rect x="1" y="0" width="1" height="1" fill="#000"/><rect x="2" y="0" width="1" height="1" fill="#000"/><rect x="3" y="0" width="1" height="1" fill="#000"/><rect x="4" y="0" width="1" height="1" fill="#000"/><rect x="0" y="1" width="1" height="1" fill="#000"/><rect x="5" y="1" width="1" height="1" fill="#000"/><rect x="0" y="2" width="1" height="1" fill="#000"/><rect x="5" y="2" width="1" height="1" fill="#000"/><rect x="0" y="3" width="1" height="1" fill="#000"/><rect x="1" y="3" width="1" height="1" fill="#000"/><rect x="5" y="3" width="1" height="1" fill="#000"/><rect x="4" y="4" width="1" height="1" fill="#000"/><rect x="3" y="5" width="1" height="1" fill="#000"/><rect x="3" y="6" width="1" height="1" fill="#000"/><rect x="3" y="7" width="1" height="1" fill="#000"/><rect x="2" y="9" width="1" height="1" fill="#000"/><rect x="3" y="9" width="1" height="1" fill="#000"/><rect x="2" y="10" width="1" height="1" fill="#000"/><rect x="3" y="10" width="1" height="1" fill="#000"/><rect x="9" y="0" width="1" height="1" fill="#000"/><rect x="10" y="0" width="1" height="1" fill="#000"/><rect x="11" y="0" width="1" height="1" fill="#000"/><rect x="12" y="0" width="1" height="1" fill="#000"/><rect x="8" y="1" width="1" height="1" fill="#000"/><rect x="13" y="1" width="1" height="1" fill="#000"/><rect x="8" y="2" width="1" height="1" fill="#000"/><rect x="13" y="2" width="1" height="1" fill="#000"/><rect x="8" y="3" width="1" height="1" fill="#000"/><rect x="9" y="3" width="1" height="1" fill="#000"/><rect x="13" y="3" width="1" height="1" fill="#000"/><rect x="12" y="4" width="1" height="1" fill="#000"/><rect x="11" y="5" width="1" height="1" fill="#000"/><rect x="11" y="6" width="1" height="1" fill="#000"/><rect x="11" y="7" width="1" height="1" fill="#000"/><rect x="10" y="9" width="1" height="1" fill="#000"/><rect x="11" y="9" width="1" height="1" fill="#000"/><rect x="10" y="10" width="1" height="1" fill="#000"/><rect x="11" y="10" width="1" height="1" fill="#000"/><rect x="17" y="0" width="1" height="1" fill="#000"/><rect x="18" y="0" width="1" height="1" fill="#000"/><rect x="19" y="0" width="1" height="1" fill="#000"/><rect x="20" y="0" width="1" height="1" fill="#000"/><rect x="16" y="1" width="1" height="1" fill="#000"/><rect x="21" y="1" width="1" height="1" fill="#000"/><rect x="16" y="2" width="1" height="1" fill="#000"/><rect x="21" y="2" width="1" height="1" fill="#000"/><rect x="16" y="3" width="1" height="1" fill="#000"/><rect x="17" y="3" width="1" height="1" fill="#000"/><rect x="21" y="3" width="1" height="1" fill="#000"/><rect x="20" y="4" width="1" height="1" fill="#000"/><rect x="19" y="5" width="1" height="1" fill="#000"/><rect x="19" y="6" width="1" height="1" fill="#000"/><rect x="19" y="7" width="1" height="1" fill="#000"/><rect x="18" y="9" width="1" height="1" fill="#000"/><rect x="19" y="9" width="1" height="1" fill="#000"/><rect x="18" y="10" width="1" height="1" fill="#000"/><rect x="19" y="10" width="1" height="1" fill="#000"/><rect x="25" y="0" width="1" height="1" fill="#000"/><rect x="26" y="0" width="1" height="1" fill="#000"/><rect x="27" y="0" width="1" height="1" fill="#000"/><rect x="28" y="0" width="1" height="1" fill="#000"/><rect x="24" y="1" width="1" height="1" fill="#000"/><rect x="29" y="1" width="1" height="1" fill="#000"/><rect x="24" y="2" width="1" height="1" fill="#000"/><rect x="29" y="2" width="1" height="1" fill="#000"/><rect x="24" y="3" width="1" height="1" fill="#000"/><rect x="25" y="3" width="1" height="1" fill="#000"/><rect x="29" y="3" width="1" height="1" fill="#000"/><rect x="28" y="4" width="1" height="1" fill="#000"/><rect x="27" y="5" width="1" height="1" fill="#000"/><rect x="27" y="6" width="1" height="1" fill="#000"/><rect x="27" y="7" width="1" height="1" fill="#000"/><rect x="26" y="9" width="1" height="1" fill="#000"/><rect x="27" y="9" width="1" height="1" fill="#000"/><rect x="26" y="10" width="1" height="1" fill="#000"/><rect x="27" y="10" width="1" height="1" fill="#000"/></svg>
<svg class="a" style="left:443px;top:68px" width="16" height="11"><rect x="1" y="0" width="1" height="1" fill="#000"/><rect x="2" y="0" width="1" height="1" fill="#000"/><rect x="3" y="0" width="1" height="1" fill="#000"/><rect x="4" y="0" width="1" height="1" fill="#000"/><rect x="0" y="1" width="1" height="1" fill="#000"/><rect x="5" y="1" width="1" height="1" fill="#000"/><rect x="0" y="2" width="1" height="1" fill="#000"/><rect x="5" y="2" width="1" height="1" fill="#000"/><rect x="0" y="3" width="1" height="1" fill="#000"/><rect x="1" y="3" width="1" height="1" fill="#000"/><rect x="5" y="3" width="1" height="1" fill="#000"/><rect x="4" y="4" width="1" height="1" fill="#000"/><rect x="3" y="5" width="1" height="1" fill="#000"/><rect x="3" y="6" width="1" height="1" fill="#000"/><rect x="3" y="7" width="1" height="1" fill="#000"/><rect x="2" y="9" width="1" height="1" fill="#000"/><rect x="3" y="9" width="1" height="1" fill="#000"/><rect x="2" y="10" width="1" height="1" fill="#000"/><rect x="3" y="10" width="1" height="1" fill="#000"/><rect x="9" y="0" width="1" height="1" fill="#000"/><rect x="10" y="0" width="1" height="1" fill="#000"/><rect x="11" y="0" width="1" height="1" fill="#000"/><rect x="12" y="0" width="1" height="1" fill="#000"/><rect x="8" y="1" width="1" height="1" fill="#000"/><rect x="13" y="1" width="1" height="1" fill="#000"/><rect x="8" y="2" width="1" height="1" fill="#000"/><rect x="13" y="2" width="1" height="1" fill="#000"/><rect x="8" y="3" width="1" height="1" fill="#000"/><rect x="9" y="3" width="1" height="1" fill="#000"/><rect x="13" y="3" width="1" height="1" fill="#000"/><rect x="12" y="4" width="1" height="1" fill="#000"/><rect x="11" y="5" width="1" height="1" fill="#000"/><rect x="11" y="6" width="1" height="1" fill="#000"/><rect x="11" y="7" width="1" height="1" fill="#000"/><rect x="10" y="9" width="1" height="1" fill="#000"/><rect x="11" y="9" width="1" height="1" fill="#000"/><rect x="10" y="10" width="1" height="1" fill="#000"/><rect x="11" y="10" width="1" height="1" fill="#000"/></svg>
<svg class="a" style="left:503px;top:68px" width="16" height="11"><rect x="1" y="0" width="1" height="1" fill="#000"/><rect x="2" y="0" width="1" height="1" fill="#000"/><rect x="3" y="0" width="1" height="1" fill="#000"/><rect x="4" y="0" width="1" height="1" fill="#000"/><rect x="0" y="1" width="1" height="1" fill="#000"/><rect x="5" y="1" width="1" height="1" fill="#000"/><rect x="0" y="2" width="1" height="1" fill="#000"/><rect x="5" y="2" width="1" height="1" fill="#000"/><rect x="0" y="3" width="1" height="1" fill="#000"/><rect x="1" y="3" width="1" height="1" fill="#000"/><rect x="5" y="3" width="1" height="1" fill="#000"/><rect x="4" y="4" width="1" height="1" fill="#000"/><rect x="3" y="5" width="1" height="1" fill="#000"/><rect x="3" y="6" width="1" height="1" fill="#000"/><rect x="3" y="7" width="1" height="1" fill="#000"/><rect x="2" y="9" width="1" height="1" fill="#000"/><rect x="3" y="9" width="1" height="1" fill="#000"/><rect x="2" y="10" width="1" height="1" fill="#000"/><rect x="3" y="10" width="1" height="1" fill="#000"/><rect x="9" y="0" width="1" height="1" fill="#000"/><rect x="10" y="0" width="1" height="1" fill="#000"/><rect x="11" y="0" width="1" height="1" fill="#000"/><rect x="12" y="0" width="1" height="1" fill="#000"/><rect x="8" y="1" width="1" height="1" fill="#000"/><rect x="13" y="1" width="1" height="1" fill="#000"/><rect x="8" y="2" width="1" height="1" fill="#000"/><rect x="13" y="2" width="1" height="1" fill="#000"/><rect x="8" y="3" width="1" height="1" fill="#000"/><rect x="9" y="3" width="1" height="1" fill="#000"/><rect x="13" y="3" width="1" height="1" fill="#000"/><rect x="12" y="4" width="1" height="1" fill="#000"/><rect x="11" y="5" width="1" height="1" fill="#000"/><rect x="11" y="6" width="1" height="1" fill="#000"/><rect x="11" y="7" width="1" height="1" fill="#000"/><rect x="10" y="9" width="1" height="1" fill="#000"/><rect x="11" y="9" width="1" height="1" fill="#000"/><rect x="10" y="10" width="1" height="1" fill="#000"/><rect x="11" y="10" width="1" height="1" fill="#000"/></svg>
<svg class="a" style="left:563px;top:68px" width="16" height="11"><rect x="1" y="0" width="1" height="1" fill="#000"/><rect x="2" y="0" width="1" height="1" fill="#000"/><rect x="3" y="0" width="1" height="1" fill="#000"/><rect x="4" y="0" width="1" height="1" fill="#000"/><rect x="0" y="1" width="1" height="1" fill="#000"/><rect x="5" y="1" width="1" height="1" fill="#000"/><rect x="0" y="2" width="1" height="1" fill="#000"/><rect x="5" y="2" width="1" height="1" fill="#000"/><rect x="0" y="3" width="1" height="1" fill="#000"/><rect x="1" y="3" width="1" height="1" fill="#000"/><rect x="5" y="3" width="1" height="1" fill="#000"/><rect x="4" y="4" width="1" height="1" fill="#000"/><rect x="3" y="5" width="1" height="1" fill="#000"/><rect x="3" y="6" width="1" height="1" fill="#000"/><rect x="3" y="7" width="1" height="1" fill="#000"/><rect x="2" y="9" width="1" height="1" fill="#000"/><rect x="3" y="9" width="1" height="1" fill="#000"/><rect x="2" y="10" width="1" height="1" fill="#000"/><rect x="3" y="10" width="1" height="1" fill="#000"/><rect x="9" y="0" width="1" height="1" fill="#000"/><rect x="10" y="0" width="1" height="1" fill="#000"/><rect x="11" y="0" width="1" height="1" fill="#000"/><rect x="12" y="0" width="1" height="1" fill="#000"/><rect x="8" y="1" width="1" height="1" fill="#000"/><rect x="13" y="1" width="1" height="1" fill="#000"/><rect x="8" y="2" width="1" height="1" fill="#000"/><rect x="13" y="2" width="1" height="1" fill="#000"/><rect x="8" y="3" width="1" height="1" fill="#000"/><rect x="9" y="3" width="1" height="1" fill="#000"/><rect x="13" y="3" width="1" height="1" fill="#000"/><rect x="12" y="4" width="1" height="1" fill="#000"/><rect x="11" y="5" width="1" height="1" fill="#000"/><rect x="11" y="6" width="1" height="1" fill="#000"/><rect x="11" y="7" width="1" height="1" fill="#000"/><rect x="10" y="9" width="1" height="1" fill="#000"/><rect x="11" y="9" width="1" height="1" fill="#000"/><rect x="10" y="10" width="1" height="1" fill="#000"/><rect x="11" y="10" width="1" height="1" fill="#000"/></svg>
<svg class="a" style="left:623px;top:68px" width="16" height="11"><rect x="1" y="0" width="1" height="1" fill="#000"/><rect x="2" y="0" width="1" height="1" fill="#000"/><rect x="3" y="0" width="1" height="1" fill="#000"/><rect x="4" y="0" width="1" height="1" fill="#000"/><rect x="0" y="1" width="1" height="1" fill="#000"/><rect x="5" y="1" width="1" height="1" fill="#000"/><rect x="0" y="2" width="1" height="1" fill="#000"/><rect x="5" y="2" width="1" height="1" fill="#000"/><rect x="0" y="3" width="1" height="1" fill="#000"/><rect x="1" y="3" width="1" height="1" fill="#000"/><rect x="5" y="3" width="1" height="1" fill="#000"/><rect x="4" y="4" width="1" height="1" fill="#000"/><rect x="3" y="5" width="1" height="1" fill="#000"/><rect x="3" y="6" width="1" height="1" fill="#000"/><rect x="3" y="7" width="1" height="1" fill="#000"/><rect x="2" y="9" width="1" height="1" fill="#000"/><rect x="3" y="9" width="1" height="1" fill="#000"/><rect x="2" y="10" width="1" height="1" fill="#000"/><rect x="3" y="10" width="1" height="1" fill="#000"/><rect x="9" y="0" width="1" height="1" fill="#000"/><rect x="10" y="0" width="1" height="1" fill="#000"/><rect x="11" y="0" width="1" height="1" fill="#000"/><rect x="12" y="0" width="1" height="1" fill="#000"/><rect x="8" y="1" width="1" height="1" fill="#000"/><rect x="13" y="1" width="1" height="1" fill="#000"/><rect x="8" y="2" width="1" height="1" fill="#000"/><rect x="13" y="2" width="1" height="1" fill="#000"/><rect x="8" y="3" width="1" height="1" fill="#000"/><rect x="9" y="3" width="1" height="1" fill="#000"/><rect x="13" y="3" width="1" height="1" fill="#000"/><rect x="12" y="4" width="1" height="1" fill="#000"/><rect x="11" y="5" width="1" height="1" fill="#000"/><rect x="11" y="6" width="1" height="1" fill="#000"/><rect x="11" y="7" width="1" height="1" fill="#000"/><rect x="10" y="9" width="1" height="1" fill="#000"/><rect x="11" y="9" width="1" height="1" fill="#000"/><rect x="10" y="10" width="1" height="1" fill="#000"/><rect x="11" y="10" width="1" height="1" fill="#000"/></svg>
<svg class="a" style="left:683px;top:68px" width="16" height="11"><rect x="1" y="0" width="1" height="1" fill="#000"/><rect x="2" y="0" width="1" height="1" fill="#000"/><rect x="3" y="0" width="1" height="1" fill="#000"/><rect x="4" y="0" width="1" height="1" fill="#000"/><rect x="0" y="1" width="1" height="1" fill="#000"/><rect x="5" y="1" width="1" height="1" fill="#000"/><rect x="0" y="2" width="1" height="1" fill="#000"/><rect x="5" y="2" width="1" height="1" fill="#000"/><rect x="0" y="3" width="1" height="1" fill="#000"/><rect x="1" y="3" width="1" height="1" fill="#000"/><rect x="5" y="3" width="1" height="1" fill="#000"/><rect x="4" y="4" width="1" height="1" fill="#000"/><rect x="3" y="5" width="1" height="1" fill="#000"/><rect x="3" y="6" width="1" height="1" fill="#000"/><rect x="3" y="7" width="1" height="1" fill="#000"/><rect x="2" y="9" width="1" height="1" fill="#000"/><rect x="3" y="9" width="1" height="1" fill="#000"/><rect x="2" y="10" width="1" height="1" fill="#000"/><rect x="3" y="10" width="1" height="1" fill="#000"/><rect x="9" y="0" width="1" height="1" fill="#000"/><rect x="10" y="0" width="1" height="1" fill="#000"/><rect x="11" y="0" width="1" height="1" fill="#000"/><rect x="12" y="0" width="1" height="1" fill="#000"/><rect x="8" y="1" width="1" height="1" fill="#000"/><rect x="13" y="1" width="1" height="1" fill="#000"/><rect x="8" y="2" width="1" height="1" fill="#000"/><rect x="13" y="2" width="1" height="1" fill="#000"/><rect x="8" y="3" width="1" height="1" fill="#000"/><rect x="9" y="3" width="1" height="1" fill="#000"/><rect x="13" y="3" width="1" height="1" fill="#000"/><rect x="12" y="4" width="1" height="1" fill="#000"/><rect x="11" y="5" width="1" height="1" fill="#000"/><rect x="11" y="6" width="1" height="1" fill="#000"/><rect x="11" y="7" width="1" height="1" fill="#000"/><rect x="10" y="9" width="1" height="1" fill="#000"/><rect x="11" y="9" width="1" height="1" fill="#000"/><rect x="10" y="10" width="1" height="1" fill="#000"/><rect x="11" y="10" width="1" height="1" fill="#000"/></svg>
<svg class="a" style="left:981px;top:68px" width="16" height="11"><rect x="1" y="0" width="1" height="1" fill="#000"/><rect x="2" y="0" width="1" height="1" fill="#000"/><rect x="3" y="0" width="1" height="1" fill="#000"/><rect x="4" y="0" width="1" height="1" fill="#000"/><rect x="0" y="1" width="1" height="1" fill="#000"/><rect x="5" y="1" width="1" height="1" fill="#000"/><rect x="0" y="2" width="1" height="1" fill="#000"/><rect x="5" y="2" width="1" height="1" fill="#000"/><rect x="0" y="3" width="1" height="1" fill="#000"/><rect x="1" y="3" width="1" height="1" fill="#000"/><rect x="5" y="3" width="1" height="1" fill="#000"/><rect x="4" y="4" width="1" height="1" fill="#000"/><rect x="3" y="5" width="1" height="1" fill="#000"/><rect x="3" y="6" width="1" height="1" fill="#000"/><rect x="3" y="7" width="1" height="1" fill="#000"/><rect x="2" y="9" width="1" height="1" fill="#000"/><rect x="3" y="9" width="1" height="1" fill="#000"/><rect x="2" y="10" width="1" height="1" fill="#000"/><rect x="3" y="10" width="1" height="1" fill="#000"/><rect x="9" y="0" width="1" height="1" fill="#000"/><rect x="10" y="0" width="1" height="1" fill="#000"/><rect x="11" y="0" width="1" height="1" fill="#000"/><rect x="12" y="0" width="1" height="1" fill="#000"/><rect x="8" y="1" width="1" height="1" fill="#000"/><rect x="13" y="1" width="1" height="1" fill="#000"/><rect x="8" y="2" width="1" height="1" fill="#000"/><rect x="13" y="2" width="1" height="1" fill="#000"/><rect x="8" y="3" width="1" height="1" fill="#000"/><rect x="9" y="3" width="1" height="1" fill="#000"/><rect x="13" y="3" width="1" height="1" fill="#000"/><rect x="12" y="4" width="1" height="1" fill="#000"/><rect x="11" y="5" width="1" height="1" fill="#000"/><rect x="11" y="6" width="1" height="1" fill="#000"/><rect x="11" y="7" width="1" height="1" fill="#000"/><rect x="10" y="9" width="1" height="1" fill="#000"/><rect x="11" y="9" width="1" height="1" fill="#000"/><rect x="10" y="10" width="1" height="1" fill="#000"/><rect x="11" y="10" width="1" height="1" fill="#000"/></svg>
<div class="a" style="left:334px;top:35px;width:79px;height:23px;border-top:1px solid #A0A0A0;border-left:1px solid #A0A0A0;border-right:1px solid #fff;border-bottom:1px solid #fff"><div style="position:absolute;left:0;top:0;right:0;bottom:0;background:#fff;border-top:1px solid #696969;border-left:1px solid #696969;border-right:1px solid #E3E3E3;border-bottom:1px solid #E3E3E3"></div></div>
<div class="t mono" style="left:336px;top:39px;font-size:17px;transform-origin:0 0;transform:scaleX(0.79)">COM1</div>
<div class="a" style="left:395px;top:37px;width:16px;height:19px;background:#F0F0F0;border-top:1px solid #F0F0F0;border-left:1px solid #F0F0F0;border-right:1px solid #696969;border-bottom:1px solid #696969"><div style="position:absolute;left:0;top:0;right:0;bottom:0;border-top:1px solid #fff;border-left:1px solid #fff;border-right:1px solid #A0A0A0;border-bottom:1px solid #A0A0A0"></div><svg style="position:absolute;left:4px;top:7px" width="7" height="4"><path d="M0 0H7L3.5 4Z" fill="#000"/></svg></div>
<svg class="a" style="left:290px;top:28px" width="36" height="34" viewBox="0 0 36 34">
<defs><radialGradient id="gl" cx="0.42" cy="0.22" r="0.85"><stop offset="0" stop-color="#F4FCFF"/><stop offset="0.25" stop-color="#A8E4F8"/><stop offset="0.5" stop-color="#38A8E0"/><stop offset="0.8" stop-color="#0A58C0"/><stop offset="1" stop-color="#06308A"/></radialGradient>
<linearGradient id="scr" x1="0" y1="0" x2="0" y2="1"><stop offset="0" stop-color="#8CF0A0"/><stop offset="0.35" stop-color="#20C8C0"/><stop offset="0.7" stop-color="#0A5AA8"/><stop offset="1" stop-color="#061E70"/></linearGradient>
<linearGradient id="bez" x1="0" y1="0" x2="0" y2="1"><stop offset="0" stop-color="#E8ECF0"/><stop offset="1" stop-color="#A8B0BC"/></linearGradient></defs>
<circle cx="16" cy="14.2" r="11" fill="url(#gl)"/>
<path d="M25.2 18 C 29 21, 32.5 26, 30.5 29.2 C 28 31.5, 20 30.8, 14.5 29.8" stroke="#66659A" stroke-width="2.1" fill="none"/>
<circle cx="23" cy="15.6" r="4.3" fill="#7CB8CC" stroke="#C4CCD4" stroke-width="2.3"/>
<path d="M21 14.5 A2.5 2.5 0 0 1 25 14" stroke="#E8F4F8" stroke-width="0.8" fill="none"/>
<path d="M4.2 16.8 L16.8 15.4 L18.6 25 L7.2 27.2 Z" fill="url(#scr)" stroke="#D4DCE4" stroke-width="0.9"/>
<path d="M7.2 27.2 L18.6 25 L19.2 27.8 L7.6 30.2 Z" fill="url(#bez)"/>
<path d="M3.6 17 L4.4 16.8 L7.4 29.8 L6.6 30 Z" fill="#C8CED6"/>
<circle cx="11.5" cy="21.2" r="2.4" fill="none" stroke="#D8FFF8" stroke-width="0.7" opacity="0.45"/>
<rect x="7.8" y="25" width="1.6" height="1" fill="#60E060"/>
</svg>
<svg class="a" style="left:440px;top:28px" width="36" height="32" viewBox="0 0 36 32"><path d="M3.5 19 L17 13 L33 15.5 L20 21.5 Z" fill="#F4F4FA" stroke="#D8D8E4" stroke-width="0.7"/><path d="M3.5 19 L20 21.5 L20 27.5 L4 25 Z" fill="#D4D6DE"/><path d="M20 21.5 L33 15.5 L33 19.5 L20 27.5 Z" fill="#7C82AC"/><circle cx="18.3" cy="24" r="1.3" fill="#18D018"/><defs><linearGradient id="ay" x1="0" y1="0" x2="0" y2="1"><stop offset="0" stop-color="#FFF0A0"/><stop offset="1" stop-color="#E8A818"/></linearGradient></defs><path d="M15.2 17 C 15 13, 16 11, 17.5 9.8 L 12.8 8.2 L 21.2 3.6 L 26.2 9.8 L 21.2 9.6 C 20.4 11, 20.6 14, 20.8 17 Z" fill="url(#ay)" stroke="#E8C860" stroke-width="0.5"/></svg>
<svg class="a" style="left:500px;top:29px" width="36" height="32" viewBox="0 0 36 32"><path d="M3.5 19 L17 13 L33 15.5 L20 21.5 Z" fill="#F4F4FA" stroke="#D8D8E4" stroke-width="0.7"/><path d="M3.5 19 L20 21.5 L20 27.5 L4 25 Z" fill="#D4D6DE"/><path d="M20 21.5 L33 15.5 L33 19.5 L20 27.5 Z" fill="#7C82AC"/><circle cx="18.3" cy="24" r="1.3" fill="#18D018"/><defs><linearGradient id="ag" x1="0" y1="0" x2="0" y2="1"><stop offset="0" stop-color="#A8F0A0"/><stop offset="1" stop-color="#109A10"/></linearGradient></defs><path d="M25.5 4 C 20 4.2, 17 7, 16.5 10.5 L 12.5 9.5 L 17.8 18.2 L 25.5 11.5 L 21 10.8 C 21 8, 22.5 5.5, 25.5 4 Z" fill="url(#ag)"/></svg>
<svg class="a" style="left:562px;top:28px" width="32" height="32" viewBox="0 0 32 32">
<circle cx="16" cy="16.5" r="12.3" fill="#B8B8C4"/>
<path d="M16 16.5 L16 4.5 A12 12 0 0 0 4 16.5 Z" fill="#EC7A70"/>
<path d="M16 16.5 L28 16.5 A12 12 0 0 0 16 4.5 Z" fill="#7AB878"/>
<path d="M16 16.5 L4 16.5 A12 12 0 0 0 16 28.5 Z" fill="#3A78C0"/>
<path d="M16 16.5 L16 28.5 A12 12 0 0 0 28 16.5 Z" fill="#FFD818"/>
<path d="M16 14.5 L25 14.5 L25 16.5 L16 16.5 Z" fill="#1C8A1C"/>
<path d="M14.2 22.8 L19.6 28.2 L27.6 16.2" stroke="#2A8C1E" stroke-width="3.6" fill="none" stroke-linejoin="miter"/>
</svg>
<svg class="a" style="left:620px;top:26px" width="36" height="36" viewBox="0 0 36 36"><defs><linearGradient id="bk620" x1="0" y1="0" x2="1" y2="1"><stop offset="0" stop-color="#E8ECF4"/><stop offset="1" stop-color="#A8B4C8"/></linearGradient><linearGradient id="cc620" x1="0" y1="0" x2="0" y2="1"><stop offset="0" stop-color="#30B010"/><stop offset="1" stop-color="#A8EC20"/></linearGradient></defs><path d="M2.5 21.5 L14.8 3.5 L33 11.5 L33.2 14.5 L21.8 33.8 L2.8 24.8 Z" fill="#74819C"/><path d="M3.2 23.2 L21.6 32.2 L32.6 13.6" stroke="#F4F6FA" stroke-width="1" fill="none"/><path d="M2.5 21 L14.8 3.5 L33 11.5 L21.5 31 Z" fill="url(#bk620)"/><ellipse cx="18.2" cy="16" rx="10.2" ry="9.2" fill="#F4F6FF" opacity="0.8"/><ellipse cx="18.2" cy="16" rx="9" ry="8" fill="url(#cc620)"/><g transform="translate(18.3 16.5)"><path d="M-1.8 -5.5 H1.8 V-0.5 H4 L0 4.8 L-4 -0.5 H-1.8 Z" fill="#fff"/></g></svg>
<svg class="a" style="left:680px;top:26px" width="36" height="36" viewBox="0 0 36 36"><defs><linearGradient id="bk680" x1="0" y1="0" x2="1" y2="1"><stop offset="0" stop-color="#E8ECF4"/><stop offset="1" stop-color="#A8B4C8"/></linearGradient><linearGradient id="cc680" x1="0" y1="0" x2="0" y2="1"><stop offset="0" stop-color="#20B0D8"/><stop offset="1" stop-color="#30E0E0"/></linearGradient></defs><path d="M2.5 21.5 L14.8 3.5 L33 11.5 L33.2 14.5 L21.8 33.8 L2.8 24.8 Z" fill="#74819C"/><path d="M3.2 23.2 L21.6 32.2 L32.6 13.6" stroke="#F4F6FA" stroke-width="1" fill="none"/><path d="M2.5 21 L14.8 3.5 L33 11.5 L21.5 31 Z" fill="url(#bk680)"/><ellipse cx="18.2" cy="16" rx="10.2" ry="9.2" fill="#F4F6FF" opacity="0.8"/><ellipse cx="18.2" cy="16" rx="9" ry="8" fill="url(#cc680)"/><g transform="translate(18.3 16.5)"><path d="M-1.8 5 H1.8 V0 H4 L0 -5 L-4 0 H-1.8 Z" fill="#fff"/></g></svg>
<svg class="a" style="left:976px;top:26px" width="44" height="38" viewBox="0 0 44 38">
<defs><linearGradient id="ub" x1="0" y1="0" x2="0" y2="1"><stop offset="0" stop-color="#F0FFF0"/><stop offset="1" stop-color="#50C830"/></linearGradient>
<radialGradient id="uh" cx="0.45" cy="0.3" r="0.7"><stop offset="0" stop-color="#FFF8E8"/><stop offset="1" stop-color="#E0A050"/></radialGradient>
<linearGradient id="bb" x1="0" y1="0" x2="0" y2="1"><stop offset="0" stop-color="#E8F4FF"/><stop offset="1" stop-color="#70A8F0"/></linearGradient></defs>
<path d="M7.5 33 C 6 24, 10 20, 17 20 C 24 20, 28 24, 26.5 33 Z" fill="url(#ub)" stroke="#2E7A28" stroke-width="1"/>
<circle cx="16.8" cy="14.2" r="6.5" fill="url(#uh)" stroke="#C08848" stroke-width="0.8"/>
<path d="M13.5 17 Q16.8 19.5 20 17 Z" fill="#fff"/>
<rect x="16" y="21" width="2" height="2" fill="#E01818"/>
<ellipse cx="30.2" cy="10.6" rx="6.5" ry="4.6" fill="url(#bb)" stroke="#3050D0" stroke-width="1"/>
<path d="M24.5 14 L23.8 16 L27 14.6 Z" fill="#3050D0"/>
</svg>
</body></html>
